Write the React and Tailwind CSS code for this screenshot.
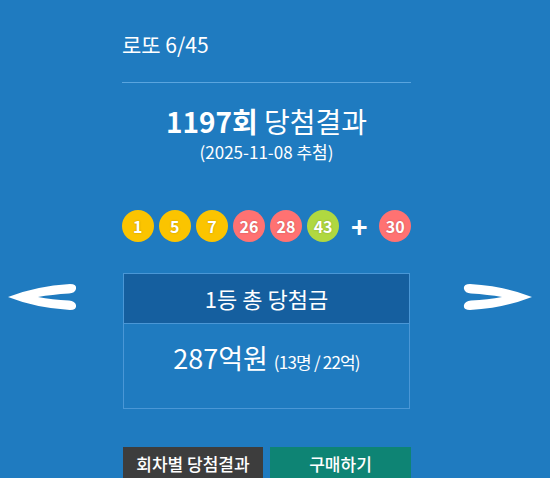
const font = { fontFamily: '"Noto Sans CJK KR", "Noto Sans", sans-serif' };

const balls = [
  { n: 1, c: 'bg-[#fbc400]' },
  { n: 5, c: 'bg-[#fbc400]' },
  { n: 7, c: 'bg-[#fbc400]' },
  { n: 26, c: 'bg-[#ff7272]' },
  { n: 28, c: 'bg-[#ff7272]' },
  { n: 43, c: 'bg-[#b0d840]' },
];

function Ball({ n, c }) {
  return (
    <span
      className={`flex h-[32px] w-[32px] items-center justify-center rounded-full text-[16px] font-bold text-white ${c}`}
      style={{ textShadow: '0 0 2px rgba(0,0,0,0.25)' }}
    >
      {n}
    </span>
  );
}

// tapered chevron, slightly soft like the original image buttons
function Arrow({ dir }) {
  return (
    <svg
      width="72"
      height="28"
      viewBox="0 0 72 28"
      className={`blur-[0.7px] ${dir === 'right' ? '-scale-x-100' : ''}`}
    >
      <path
        d="M2 14 Q 30 3 64 1 Q 71 1 70 6 Q 69 10 63 10.5 Q 46 11.5 32 14 Q 46 16.5 63 17.5 Q 69 18 70 22 Q 71 27 64 27 Q 30 25 2 14 Z"
        fill="white"
      />
    </svg>
  );
}

export default function App() {
  return (
    <div className="h-[478px] w-[550px] overflow-hidden bg-[#1f7bc0] text-white" style={font}>
      <div className="ml-[122px] w-[289px] pt-[28px]">
        <h2 className="text-[21px] leading-[32px]">로또 6/45</h2>
        <div className="mt-[22px] h-px bg-[#5aa5df]" />
        <div className="mt-[18px] text-center">
          <p className="text-[28px] leading-[40px]">
            <strong className="font-bold">1197회</strong> 당첨결과
          </p>
          <p className="text-[17px] leading-[22px]">(2025-11-08 추첨)</p>
        </div>
        <div className="mt-[47px] flex items-center justify-center gap-[5.5px]">
          {balls.map((b) => (
            <Ball key={b.n} {...b} />
          ))}
          <span className="w-[30px] text-center text-[28px] font-bold leading-none">+</span>
          <Ball n={30} c="bg-[#ff7272]" />
        </div>
      </div>

      <div className="mt-[31px] flex items-start">
        <div className="ml-[6px] mt-[10px]">
          <Arrow dir="left" />
        </div>
        <div className="ml-[45px] w-[287px] border border-[#4a97d6]">
          <div className="flex h-[49px] items-center justify-center bg-[#155f9f] text-[22px]">1등 총 당첨금</div>
          <div className="flex h-[85px] items-baseline justify-center border-t border-[#4a97d6] pt-[14px]">
            <span className="text-[27px] leading-[40px]">287억원</span>
            <span className="ml-[6px] text-[17px] tracking-[-0.8px]">(13명 / 22억)</span>
          </div>
        </div>
        <div className="ml-[52px] mt-[10px]">
          <Arrow dir="right" />
        </div>
      </div>

      <div className="ml-[123px] mt-[38px] flex w-[288px] gap-[7px]">
        <button className="h-[34px] w-[140px] bg-[#3d3d3d] text-[17px] font-medium text-white">회차별 당첨결과</button>
        <button className="h-[34px] w-[141px] bg-[#0e8474] text-[17px] font-medium text-white">구매하기</button>
      </div>
    </div>
  );
}
